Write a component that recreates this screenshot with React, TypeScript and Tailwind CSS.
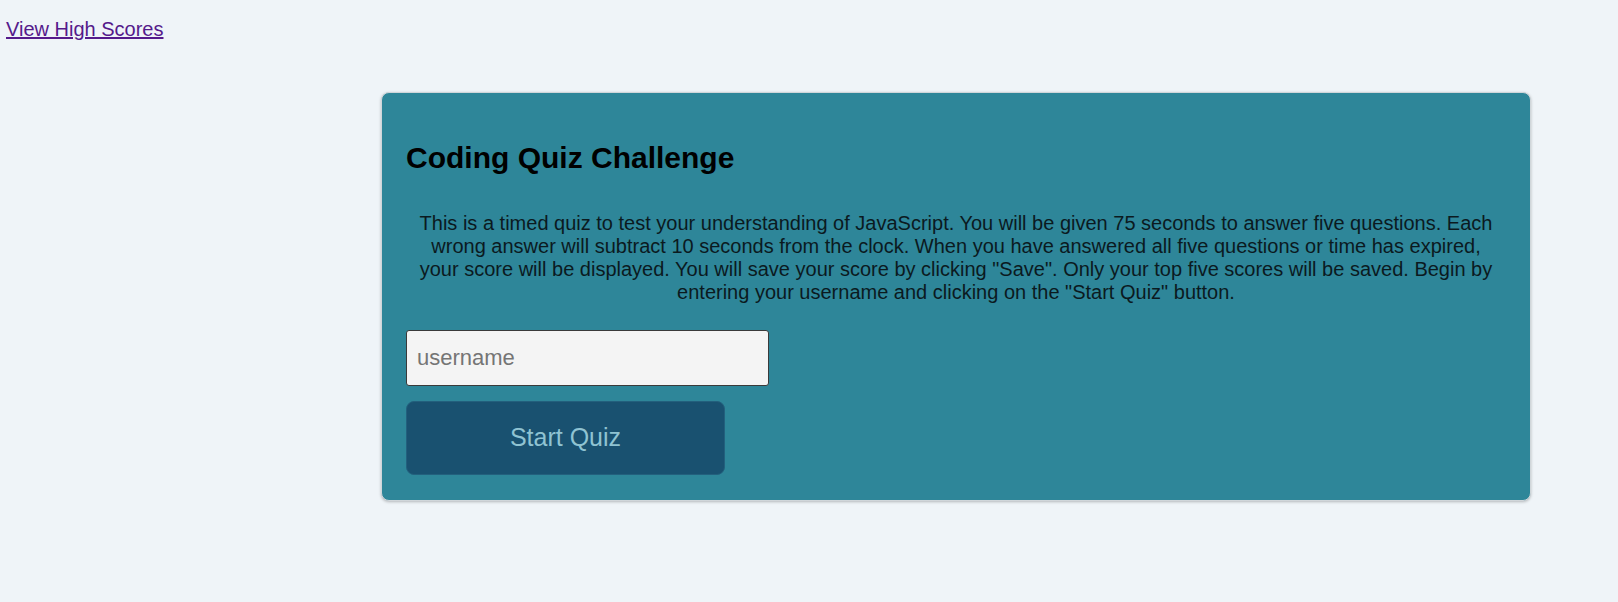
const App = () => {
    return (
        <div className="min-h-screen w-full bg-[#eff4f8] font-['Liberation_Sans',Arial,sans-serif] text-black">
            <div className="pt-[18px] pl-[6px] text-[20px] leading-[23px]">
                <a href="#" className="text-[#551a8b] underline">View High Scores</a>
            </div>
            <div className="pl-[381px] mt-[51px]">
                <div className="w-[1150px] rounded-lg border border-[#d0d6da] bg-[#2e8699] px-[24px] pt-[25px] pb-[25px] shadow-[0_1px_3px_rgba(0,0,0,0.25)]">
                    <h2 className="mt-[24px] text-[30px] font-bold leading-[32px]">Coding Quiz Challenge</h2>
                    <p className="mt-[38px] px-[10px] text-center text-[20px] leading-[23px] text-[#0b1a1f]">
                        This is a timed quiz to test your understanding of JavaScript. You will be given 75 seconds to answer five questions. Each wrong answer will subtract 10 seconds from the clock. When you have answered all five questions or time has expired, your score will be displayed. You will save your score by clicking "Save". Only your top five scores will be saved. Begin by entering your username and clicking on the "Start Quiz" button.
                    </p>
                    <input
                        type="text"
                        placeholder="username"
                        className="mt-[26px] block h-[56px] w-[363px] rounded-[3px] border border-[#3a3a3a] bg-[#f4f4f4] pl-[10px] text-[22px] text-black placeholder:text-[#757575] outline-none"
                    />
                    <button className="mt-[15px] block h-[74px] w-[319px] rounded-lg border border-[#23607d] bg-[#195170] text-[25px] text-[#8fc3d2]">
                        Start Quiz
                    </button>
                </div>
            </div>
        </div>
    )
}

export default App;
